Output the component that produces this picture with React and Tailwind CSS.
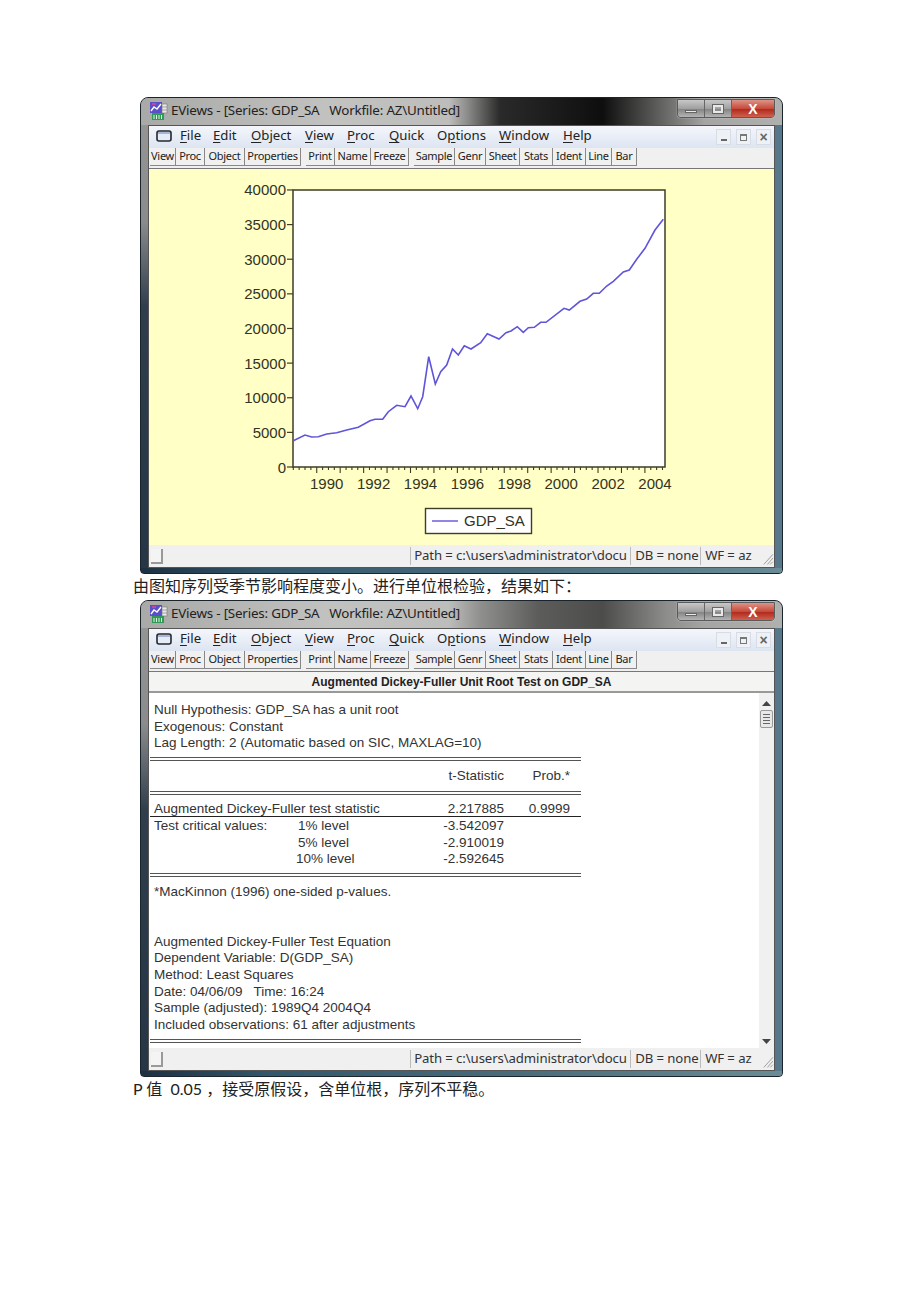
const sans = "font-['Noto_Sans','Open_Sans',sans-serif]";

const menuItems = [
  { label: 'File', key: 'F', w: 'w-[33px]' },
  { label: 'Edit', key: 'E', w: 'w-[38px]' },
  { label: 'Object', key: 'O', w: 'w-[54px]' },
  { label: 'View', key: 'V', w: 'w-[42px]' },
  { label: 'Proc', key: 'P', w: 'w-[42px]' },
  { label: 'Quick', key: 'Q', w: 'w-[48px]' },
  { label: 'Options', key: 'p', w: 'w-[62px]' },
  { label: 'Window', key: 'W', w: 'w-[64px]' },
  { label: 'Help', key: 'H', w: 'w-[40px]' },
];

const toolGroups = [
  [['View', 'w-[26px]'], ['Proc', 'w-[29px]'], ['Object', 'w-[40px]'], ['Properties', 'w-[56px]']],
  [['Print', 'w-[29px]'], ['Name', 'w-[36px]'], ['Freeze', 'w-[38px]']],
  [['Sample', 'w-[41px]'], ['Genr', 'w-[31px]'], ['Sheet', 'w-[34px]'], ['Stats', 'w-[33px]'], ['Ident', 'w-[33px]'], ['Line', 'w-[26px]'], ['Bar', 'w-[25px]']],
];

const series = [
  [293.3, 440.7], [305, 435], [311.7, 437], [318.3, 436.7], [326.7, 434], [336.7, 432.7], [346.7, 430], [358.3, 427.3],
  [370, 420.7], [375, 419.3], [382.7, 419.3], [388.3, 411.7], [396.7, 405.3], [405, 406.7], [411, 396], [417.7, 408.7],
  [422.7, 396.7], [428.7, 356.7], [435.3, 384], [440.7, 371.7], [446.7, 365], [452.5, 349], [458.3, 355], [464.3, 345.7],
  [471, 349], [480.7, 342.7], [487.3, 333.7], [499, 339], [506, 332.7], [511, 331], [517.3, 326.7], [523.3, 332.3],
  [528.3, 327.7], [534.3, 327.3], [540.7, 322.3], [546, 322.3], [564, 308.3], [569.3, 310], [580, 301.3], [586.7, 299],
  [593.3, 293.3], [599.3, 293.3], [606.7, 286], [613.3, 281.3], [623.3, 272], [629.3, 270], [636.7, 259.3], [645, 248.3],
  [655, 230], [663.3, 219.3],
];

const yLabels = ['0', '5000', '10000', '15000', '20000', '25000', '30000', '35000', '40000'];
const xLabels = ['1990', '1992', '1994', '1996', '1998', '2000', '2002', '2004'];

function AppIcon() {
  return (
    <svg width="20" height="20" viewBox="0 0 20 20" className="shrink-0">
      <rect x="1" y="1" width="12" height="11" fill="#5a4fc8" />
      <path d="M2 10 L5 6 L8 8 L12 3" stroke="#fff" strokeWidth="1.4" fill="none" />
      <path d="M3 3 L7 3" stroke="#e04a8a" strokeWidth="1.5" />
      <rect x="13" y="3" width="5" height="9" fill="#e8e8e8" stroke="#777" strokeWidth="0.6" />
      <path d="M13 6 H18 M13 9 H18" stroke="#777" strokeWidth="0.6" />
      <rect x="3" y="12" width="12" height="7" fill="#2f9a55" />
      <path d="M5 18 V14 M7.5 18 V14 M10 18 V14 M12.5 18 V14" stroke="#dff5e4" strokeWidth="1" />
    </svg>
  );
}

function CaptionButtons() {
  return (
    <div className="flex h-[19px] mt-[1px] mr-[7px] rounded-b-[4px] border border-[#5a5a5a] overflow-hidden shadow-[0_0_1px_#fff]">
      <div className="w-[27px] flex items-center justify-center bg-[linear-gradient(180deg,#c8c8c8,#a0a0a0_50%,#858585_55%,#b4b4b4)] border-r border-[#666]">
        <div className="w-[12px] h-[3px] mt-[5px] bg-[#e8e8e8] border border-[#666]" />
      </div>
      <div className="w-[27px] flex items-center justify-center bg-[linear-gradient(180deg,#c8c8c8,#a0a0a0_50%,#858585_55%,#b4b4b4)] border-r border-[#666]">
        <div className="w-[10px] h-[8px] border-2 border-[#e8e8e8] outline outline-1 outline-[#666]" />
      </div>
      <div className="w-[42px] flex items-center justify-center bg-[linear-gradient(180deg,#dc9488,#c84a3a_50%,#b02c1e_55%,#d0604e)]">
        <span className="text-white text-[14px] leading-none font-bold font-['Liberation_Sans',sans-serif]">X</span>
      </div>
    </div>
  );
}

function TitleBar({ glow }) {
  return (
    <div className={`h-[27px] flex items-start justify-between rounded-t-[7px] ${glow}`}>
      <div className="flex items-center h-[25px] pl-[8px] gap-[2px]">
        <AppIcon />
        <span className={`${sans} text-[13.4px] tracking-[-0.2px] text-[#222] whitespace-pre`}>
          {'EViews - [Series: GDP_SA   Workfile: AZ\\Untitled]'}
        </span>
      </div>
      <CaptionButtons />
    </div>
  );
}

function MenuBar() {
  return (
    <div className="h-[22px] flex items-center bg-[linear-gradient(180deg,#f4f6fb,#dde5f2)] pl-[7px] pb-[2px]">
      <svg width="16" height="12" viewBox="0 0 16 12" className="shrink-0 mr-[8px]">
        <rect x="1" y="1" width="14" height="10" rx="2" fill="#e4ecf8" stroke="#26262e" strokeWidth="1.6" />
        <path d="M2 3 H14" stroke="#7f93c0" strokeWidth="1.2" />
      </svg>
      {menuItems.map((m) => {
        const i = m.label.indexOf(m.key);
        return (
          <span key={m.label} className={`${m.w} ${sans} text-[13.2px] text-[#222] whitespace-nowrap`}>
            {m.label.slice(0, i)}
            <span className="underline underline-offset-2">{m.key}</span>
            {m.label.slice(i + 1)}
          </span>
        );
      })}
      <div className="ml-auto flex gap-[5px] pr-[3px] mt-[2px]">
        {[0, 1, 2].map((i) => (
          <div key={i} className="w-[15px] h-[16px] flex items-center justify-center bg-[#eef1f6] border border-[#d8dce4] text-[#666]">
            {i === 0 && <div className="w-[6px] h-[2px] bg-[#666] mt-[6px]" />}
            {i === 1 && <div className="w-[7px] h-[7px] border border-t-2 border-[#777]" />}
            {i === 2 && <span className="text-[14px] leading-none font-bold font-['Liberation_Sans',sans-serif]">×</span>}
          </div>
        ))}
      </div>
    </div>
  );
}

function ToolBar() {
  return (
    <div className="h-[21px] flex items-start bg-[#f0f0f0] pl-[1px] gap-[5px] border-b border-[#777]">
      {toolGroups.map((group, g) => (
        <div key={g} className="flex">
          {group.map(([label, w]) => (
            <div
              key={label}
              className={`${w} h-[18px] flex items-center justify-center border-r border-b border-[#888] ${sans} text-[11px] tracking-[-0.3px] text-[#222] whitespace-nowrap`}
            >
              {label}
            </div>
          ))}
        </div>
      ))}
    </div>
  );
}

function StatusBar() {
  return (
    <div className="h-[22px] flex items-center bg-[#f0f0f0] pl-[2px]">
      <div className="w-[13px] h-[15px] mt-[1px] border-r-2 border-b-2 border-[#999] bg-[#f4f4f4]" />
      <div className={`ml-[247px] flex h-[18px] ${sans} text-[13.2px] tracking-[-0.1px] text-[#333] leading-[17px]`}>
        <div className="w-[220px] pl-[3px] border-l border-[#bbb] overflow-hidden whitespace-nowrap">Path = c:\users\administrator\docu</div>
        <div className="w-[70px] pl-[4px] border-l border-[#bbb] overflow-hidden whitespace-nowrap">DB = none</div>
        <div className="w-[61px] pl-[4px] border-l border-[#bbb] overflow-hidden whitespace-nowrap">WF = az</div>
      </div>
      <svg width="14" height="16" viewBox="0 0 14 16" className="mt-[4px]">
        <path d="M13 4 L3 15 M13 8 L7 15 M13 12 L10 15" stroke="#999" strokeWidth="1" />
      </svg>
    </div>
  );
}

function Window({ glow, children }) {
  return (
    <div className="w-[643px] h-[477px] flex flex-col rounded-t-[8px] rounded-b-[4px] border border-[#1a242c] bg-[linear-gradient(90deg,transparent_50%,#56788a_50%),linear-gradient(180deg,#979796_0%,#8b8b8b_26%,#2f3d4c_44%,#263646_100%)]">
      <TitleBar glow={glow} />
      <div className="flex-1 mx-[7px] flex flex-col border border-[#555] min-h-0">
        <MenuBar />
        <ToolBar />
        {children}
        <StatusBar />
      </div>
      <div className="h-[5px] rounded-b-[3px] bg-[linear-gradient(90deg,#1d3040,#33586c_20%,#4a6d7c_60%,#6a8c96)]" />
    </div>
  );
}

function GraphView() {
  const points = series.map((p) => p.join(',')).join(' ');
  const ticks = [];
  for (let i = 0; i <= 63; i++) {
    const x = 293.3 + i * 5.86;
    if (x > 665) break;
    ticks.push({ x, major: i > 0 && i % 4 === 0 });
  }
  return (
    <div className="flex-1 bg-[#ffffc6] min-h-0">
      <svg viewBox="149 169 625 376" className="w-full h-full block font-['Liberation_Sans',sans-serif]">
        <rect x="293" y="190" width="372" height="277" fill="#fff" stroke="#3d3d28" strokeWidth="1.5" />
        {yLabels.map((t, i) => {
          const y = 467 - i * 34.63;
          return (
            <g key={t}>
              <path d={`M287 ${y} H293`} stroke="#3d3d28" strokeWidth="1.2" />
              <text x="286" y={y + 5.5} textAnchor="end" fontSize="15" fill="#333322">{t}</text>
            </g>
          );
        })}
        {ticks.map((t) => (
          <path key={t.x} d={`M${t.x} 467 V${t.major ? 473 : 470}`} stroke="#3d3d28" strokeWidth="1.1" />
        ))}
        {xLabels.map((t, i) => (
          <text key={t} x={326.7 + i * 46.9} y="489" textAnchor="middle" fontSize="15" fill="#333322">{t}</text>
        ))}
        <polyline points={points} fill="none" stroke="#5f54da" strokeWidth="1.6" />
        <rect x="425.5" y="508.5" width="106" height="25" fill="#fff" stroke="#3d3d28" strokeWidth="1.4" />
        <path d="M432 521 H458" stroke="#5f54da" strokeWidth="1.4" />
        <text x="464" y="526" fontSize="15" fill="#333322">GDP_SA</text>
      </svg>
    </div>
  );
}

function DoubleRule({ className = '' }) {
  return <div className={`w-[431px] h-[4px] border-y border-[#555] ${className}`} />;
}

function Line({ children }) {
  return <div className="h-[16.67px] leading-[16.67px] whitespace-pre">{children}</div>;
}

const tableRow = 'grid grid-cols-[144px_100px_106px_66px] pl-[4px] w-[431px]';

function ReportView() {
  return (
    <div className="flex-1 flex flex-col min-h-0 bg-white font-['Liberation_Sans',sans-serif] text-[13.5px] text-[#333]">
      <div className="h-[21px] flex items-center justify-center bg-[#f4f4f2] border-b-2 border-[#999]">
        <span className="font-bold text-[12px] text-[#222]">Augmented Dickey-Fuller Unit Root Test on GDP_SA</span>
      </div>
      <div className="flex-1 flex min-h-0">
        <div className="flex-1 pl-[1px] pt-[9px]">
          <div className="pl-[4px]">
            <Line>Null Hypothesis: GDP_SA has a unit root</Line>
            <Line>Exogenous: Constant</Line>
            <Line>Lag Length: 2 (Automatic based on SIC, MAXLAG=10)</Line>
          </div>
          <DoubleRule className="mt-[5px]" />
          <div className={`${tableRow} h-[30px] items-center`}>
            <span className="col-start-3 text-right">t-Statistic</span>
            <span className="text-right">Prob.*</span>
          </div>
          <DoubleRule />
          <div className={`${tableRow} mt-[5px] h-[17px] leading-[17px] border-b border-[#222]`}>
            <span className="col-span-2 whitespace-nowrap">Augmented Dickey-Fuller test statistic</span>
            <span className="text-right">2.217885</span>
            <span className="text-right">0.9999</span>
          </div>
          <div className={`${tableRow} pt-[1px] leading-[16.67px]`}>
            <span>Test critical values:</span>
            <span>1% level</span>
            <span className="text-right">-3.542097</span>
            <span />
            <span />
            <span>5% level</span>
            <span className="text-right">-2.910019</span>
            <span />
            <span />
            <span className="-ml-[2px]">10% level</span>
            <span className="text-right">-2.592645</span>
            <span />
          </div>
          <DoubleRule className="mt-[5px]" />
          <div className="pl-[4px] mt-[7px]">
            <Line>*MacKinnon (1996) one-sided p-values.</Line>
          </div>
          <div className="pl-[4px] mt-[33px]">
            <Line>Augmented Dickey-Fuller Test Equation</Line>
            <Line>Dependent Variable: D(GDP_SA)</Line>
            <Line>Method: Least Squares</Line>
            <Line>{'Date: 04/06/09   Time: 16:24'}</Line>
            <Line>Sample (adjusted): 1989Q4 2004Q4</Line>
            <Line>Included observations: 61 after adjustments</Line>
          </div>
          <DoubleRule className="mt-[5px]" />
        </div>
        <div className="w-[15px] flex flex-col items-center bg-[#f0f0f0] pt-[8px] pb-[4px]">
          <svg width="9" height="5" viewBox="0 0 9 5"><path d="M4.5 0 L9 5 H0 Z" fill="#444" /></svg>
          <div className="w-[13px] h-[18px] mt-[4px] flex flex-col items-center justify-center gap-[2px] bg-[#e8e8e8] border border-[#999] rounded-[2px]">
            <div className="w-[7px] h-[1px] bg-[#666]" />
            <div className="w-[7px] h-[1px] bg-[#666]" />
            <div className="w-[7px] h-[1px] bg-[#666]" />
            <div className="w-[7px] h-[1px] bg-[#666]" />
          </div>
          <svg width="9" height="5" viewBox="0 0 9 5" className="mt-auto"><path d="M0 0 H9 L4.5 5 Z" fill="#444" /></svg>
        </div>
      </div>
    </div>
  );
}

function Caption({ children }) {
  return (
    <div className="h-[26px] -ml-[7px] leading-[22px] text-[16px] text-[#222] whitespace-pre font-['Noto_Sans_CJK_SC','Noto_Sans',sans-serif]">
      {children}
    </div>
  );
}

export default function App() {
  return (
    <div className="w-[920px] h-[1302px] bg-white pt-[97px] pl-[140px]">
      <Window glow="bg-[linear-gradient(90deg,#a9a9a7_0%,#c2c2c0_30%,#bdbdbb_48%,#8a8a88_51%,#2a2a2a_56%,#0e0e0e_72%,#6a6a68_82%,#a5a5a3_88%,#b0b0ae_100%)]">
        <GraphView />
      </Window>
      <Caption>{'由图知序列受季节影响程度变小。进行单位根检验\uFF0C结果如下\uFF1A'}</Caption>
      <Window glow="bg-[linear-gradient(90deg,#a9a9a7_0%,#c2c2c0_30%,#bdbdbb_48%,#8f8f8d_53%,#5c5c5a_62%,#4c4c4a_72%,#8d8d8b_82%,#a5a5a3_88%,#b0b0ae_100%)]">
        <ReportView />
      </Window>
      <Caption>
        <span className="font-['Lato','Noto_Sans_CJK_SC',sans-serif]">P </span>值<span className="font-['Lato','Noto_Sans_CJK_SC',sans-serif]">  0.05 </span>{'\uFF0C接受原假设\uFF0C含单位根\uFF0C序列不平稳。'}
      </Caption>
    </div>
  );
}
